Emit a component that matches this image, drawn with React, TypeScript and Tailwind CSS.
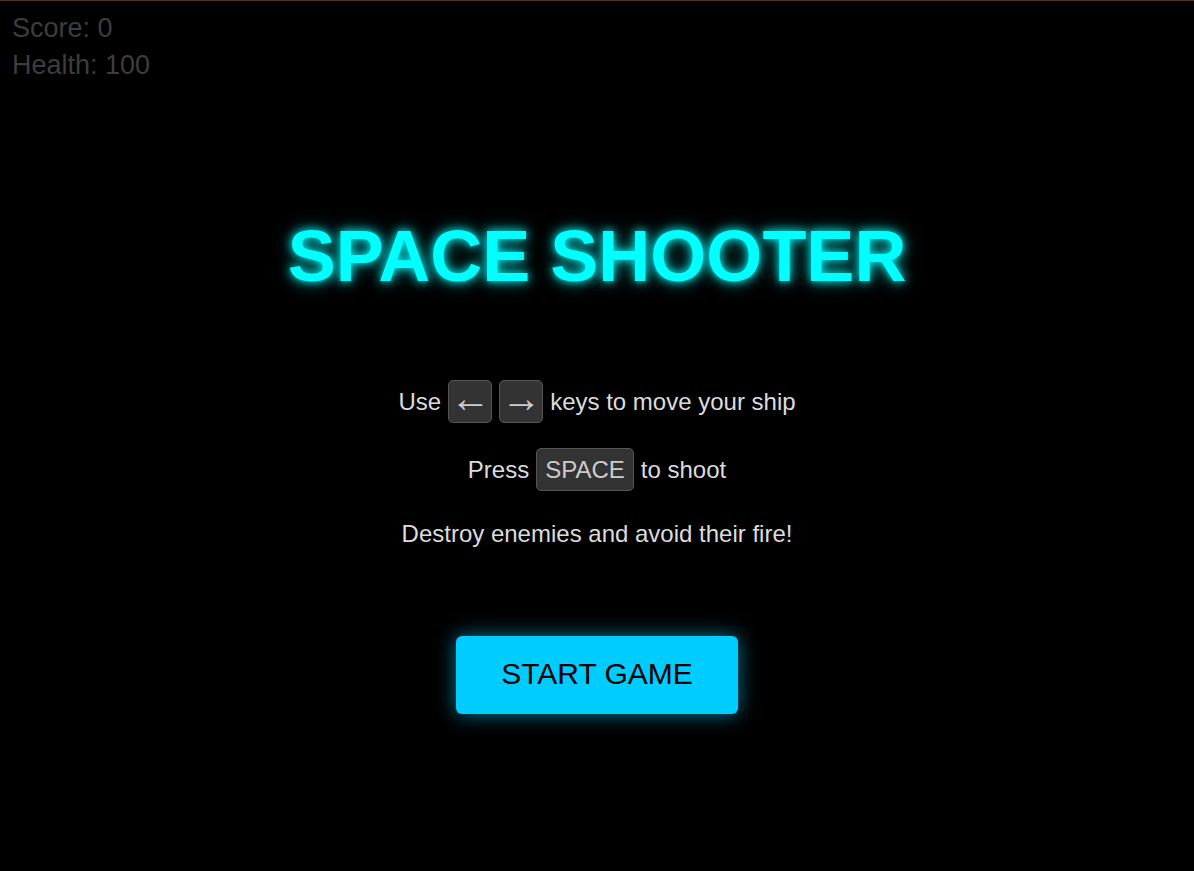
const font = "font-['Liberation_Sans',Arial,sans-serif]";

function Key({ children, arrow }: { children: React.ReactNode; arrow?: boolean }) {
  return (
    <span
      className={
        arrow
          ? "inline-flex h-[43px] w-[44px] items-center justify-center rounded-[5px] border border-[#555] bg-[#333] text-[40px] leading-none text-[#ccc]"
          : "inline-flex h-[43px] items-center justify-center rounded-[5px] border border-[#555] bg-[#333] px-2 text-[#ccc]"
      }
    >
      {children}
    </span>
  );
}

export default function App() {
  return (
    <div className={`min-h-[871px] border-t border-[#4f3421] bg-black ${font}`}>
      {/* HUD */}
      <div className="px-3 pt-[9px] text-[27px] leading-[37px] text-[#3d3d3d]">
        <div>Score: 0</div>
        <div>Health: 100</div>
      </div>

      {/* Start screen */}
      <div className="flex flex-col items-center">
        <h1 className="mt-[136px] text-[72px] font-bold leading-none text-[#00ffff] [text-shadow:0_0_10px_#00ffff,0_0_18px_rgba(0,255,255,0.5)]">
          SPACE SHOOTER
        </h1>

        <div className="mt-[88px] flex flex-col items-center text-[24px] text-[#dcdcdc]">
          <div className="flex h-[43px] items-center gap-[7px]">
            <span>Use</span>
            <Key arrow>
              <span className="-mt-[7px]">←</span>
            </Key>
            <Key arrow>
              <span className="-mt-[7px]">→</span>
            </Key>
            <span>keys to move your ship</span>
          </div>
          <div className="mt-[25px] flex h-[43px] items-center gap-[7px]">
            <span>Press</span>
            <Key>SPACE</Key>
            <span>to shoot</span>
          </div>
          <div className="mt-[21px] flex h-[43px] items-center">
            <span>Destroy enemies and avoid their fire!</span>
          </div>
        </div>

        <button
          type="button"
          className="mt-[81px] flex h-[78px] w-[282px] items-center justify-center rounded-[6px] bg-[#00ccff] pb-[3px] text-[30px] text-black shadow-[0_0_20px_rgba(0,204,255,0.6)]"
        >
          START GAME
        </button>
      </div>
    </div>
  );
}
